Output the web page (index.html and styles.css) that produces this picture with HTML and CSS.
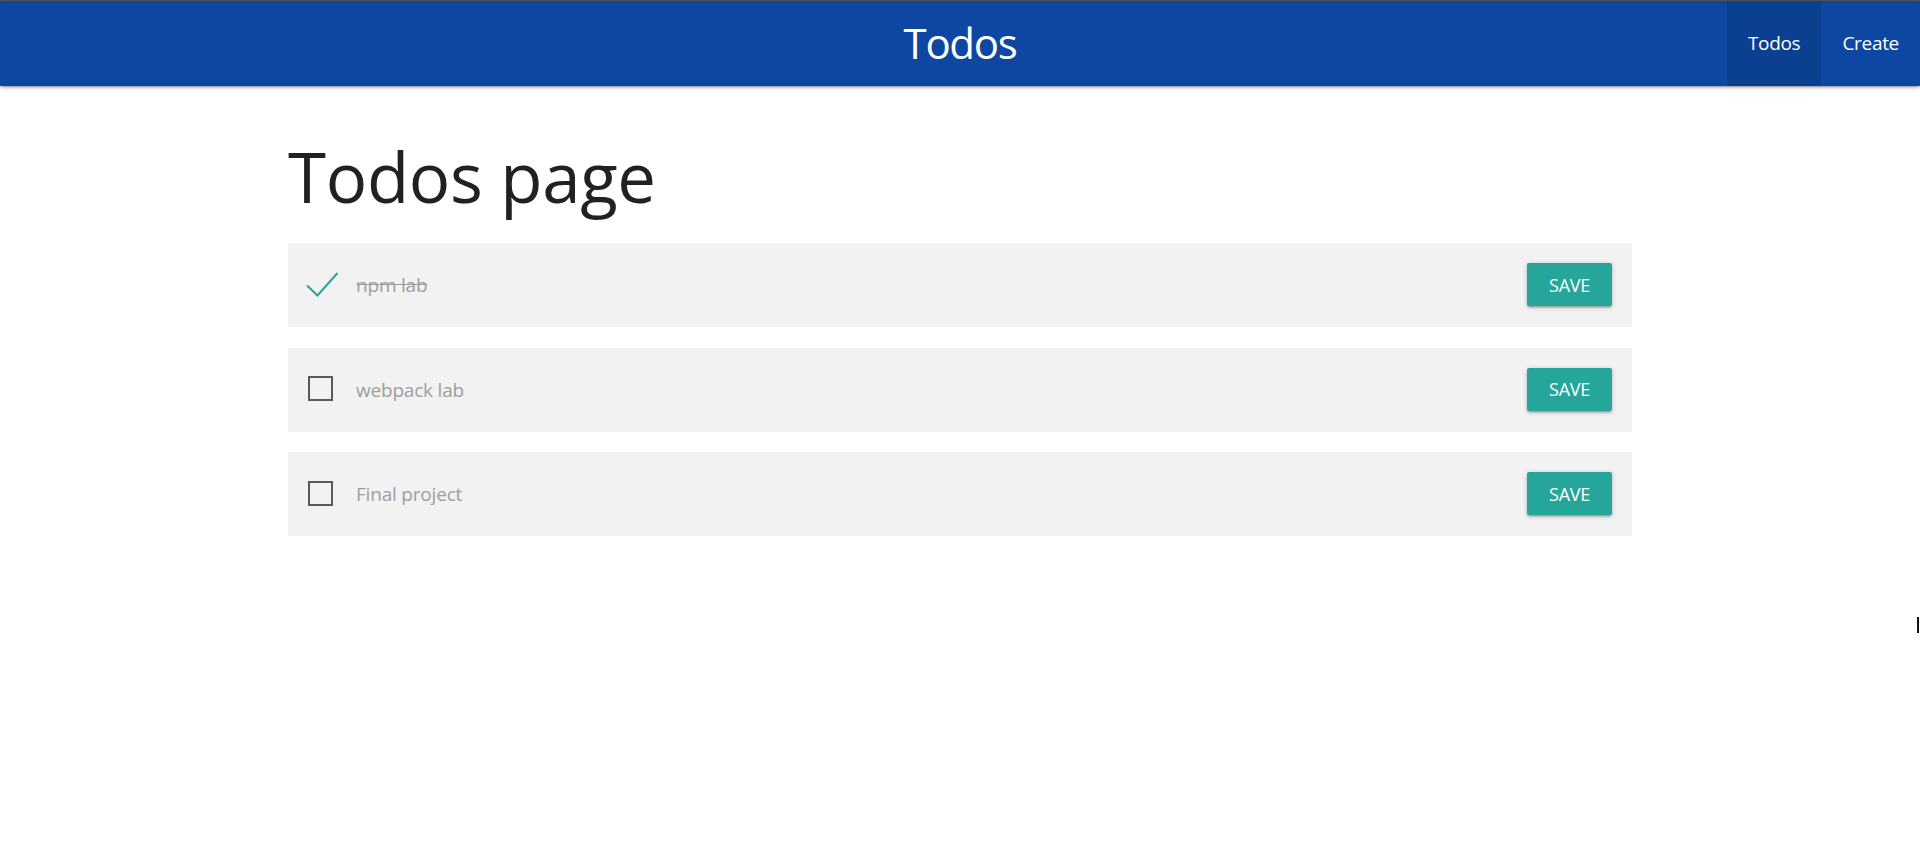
FILE: index.html
```html
<!DOCTYPE html>
<html>
<head>
<meta charset="utf-8">
<title>Todos</title>
<link rel="stylesheet" href="styles.css">
</head>
<body>
<div class="topline"></div>
<nav class="nav">
  <div class="nav-side"></div>
  <div class="brand">Todos</div>
  <ul class="nav-links">
    <li class="nav-item active">Todos</li>
    <li class="nav-item">Create</li>
  </ul>
</nav>
<main class="container">
  <h1 class="title">Todos page</h1>
  <div class="todo">
    <span class="check-wrap">
      <svg class="checkmark" width="33" height="26" viewBox="0 0 33 26"><polyline points="1,13.5 11.5,23.5 31.5,1" fill="none" stroke="#26a69a" stroke-width="2"/></svg>
    </span>
    <span class="todo-text done">npm lab</span>
    <button class="btn">SAVE</button>
  </div>
  <div class="todo">
    <span class="check-wrap"><span class="box"></span></span>
    <span class="todo-text">webpack lab</span>
    <button class="btn">SAVE</button>
  </div>
  <div class="todo">
    <span class="check-wrap"><span class="box"></span></span>
    <span class="todo-text">Final project</span>
    <button class="btn">SAVE</button>
  </div>
</main>
<div class="cursor"></div>
</body>
</html>
```
FILE: styles.css
```css
html, body {
  margin: 0;
  padding: 0;
  background: #fff;
  font-family: "Open Sans", "Noto Sans", sans-serif;
}
.topline {
  height: 1px;
  background: #4d5560;
}
.nav {
  height: 85px;
  background: #0d47a1;
  box-shadow: 0 2px 2px 0 rgba(0,0,0,0.14), 0 3px 1px -2px rgba(0,0,0,0.12), 0 1px 5px 0 rgba(0,0,0,0.2);
  display: grid;
  grid-template-columns: 1fr auto 1fr;
  color: #fff;
  position: relative;
}
.brand {
  font-size: 42px;
  line-height: 83px;
  letter-spacing: -1.3px;
}
.nav-links {
  list-style: none;
  margin: 0;
  padding: 0;
  display: flex;
  justify-content: flex-end;
}
.nav-item {
  font-size: 19px;
  line-height: 85px;
  padding: 0 21px;
  letter-spacing: -0.3px;
}
.nav-item.active {
  background: rgba(0,0,0,0.1);
}
.container {
  width: 1344px;
  margin: 0 auto;
}
.title {
  font-weight: 400;
  font-size: 69px;
  line-height: 78px;
  margin: 51px 0 28px 0;
  color: #212121;
  letter-spacing: -0.3px;
}
.todo {
  height: 84px;
  background: #f2f2f2;
  display: flex;
  align-items: center;
  padding: 0 20px 0 18px;
  margin-bottom: 20.5px;
}
.check-wrap {
  width: 50px;
  display: flex;
  align-items: center;
}
.checkmark {
  display: block;
  margin-top: -1px;
}
.box {
  display: block;
  width: 21px;
  height: 21px;
  border: 2px solid #5a5a5a;
  margin-left: 2px;
  margin-top: -2px;
}
.todo-text {
  flex: 1;
  font-size: 19px;
  color: #9e9e9e;
  letter-spacing: -0.2px;
}
.todo-text.done {
  text-decoration: line-through;
}
.btn {
  width: 85px;
  height: 43px;
  border: none;
  border-radius: 2px;
  background: #26a69a;
  color: #fff;
  font-family: "Open Sans", "Noto Sans", sans-serif;
  font-size: 18px;
  letter-spacing: -0.3px;
  padding: 0;
  margin-top: -1px;
  box-shadow: 0 2px 2px 0 rgba(0,0,0,0.14), 0 3px 1px -2px rgba(0,0,0,0.12), 0 1px 5px 0 rgba(0,0,0,0.2);
}
.cursor {
  position: absolute;
  left: 1917px;
  top: 617px;
  width: 2px;
  height: 16px;
  background: #111;
}
```
